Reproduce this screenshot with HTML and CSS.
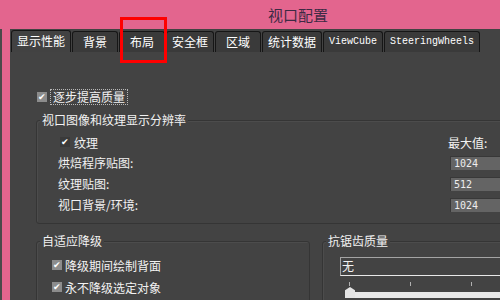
FILE: index.html
```html
<!DOCTYPE html>
<html lang="zh-CN">
<head>
<meta charset="UTF-8">
<title>视口配置</title>
<link rel="stylesheet" href="styles.css">
</head>
<body>
<div class="titlebar">视口配置</div>
<div class="main">
  <div class="edge"></div>
  <div class="panel">
    <div class="tabs">
      <div class="tab active">显示性能</div>
      <div class="tab">背景</div>
      <div class="tab">布局</div>
      <div class="tab">安全框</div>
      <div class="tab">区域</div>
      <div class="tab">统计数据</div>
      <div class="tab mono">ViewCube</div>
      <div class="tab mono">SteeringWheels</div>
    </div>

    <div class="content">
      <div class="check-row top">
        <span class="box grey">✔</span>
        <span class="focus">逐步提高质量</span>
      </div>

      <div class="group res">
        <span class="group-title">视口图像和纹理显示分辨率</span>
        <div class="res-row first">
          <span class="cell"><span class="box dark">✔</span>纹理</span>
          <span class="max">最大值:</span>
        </div>
        <div class="res-row">
          <span class="cell">烘焙程序贴图:</span>
          <span class="num">1024</span>
        </div>
        <div class="res-row">
          <span class="cell">纹理贴图:</span>
          <span class="num">512</span>
        </div>
        <div class="res-row">
          <span class="cell">视口背景/环境:</span>
          <span class="num">1024</span>
        </div>
      </div>

      <div class="bottom">
        <div class="group degrade">
          <span class="group-title">自适应降级</span>
          <div class="check-row line"><span class="box grey">✔</span>降级期间绘制背面</div>
          <div class="check-row line"><span class="box grey">✔</span>永不降级选定对象</div>
        </div>
        <div class="group aa">
          <span class="group-title">抗锯齿质量</span>
          <div class="select">无</div>
          <div class="ticks"><span></span><span></span><span></span></div>
          <div class="slider"><span class="thumb"></span><span class="track"></span></div>
        </div>
      </div>
    </div>
  </div>
</div>
<div class="marker"></div>
</body>
</html>
```

FILE: styles.css
```css
body {
  margin: 0;
  width: 500px;
  height: 300px;
  overflow: hidden;
  background: #e3658e;
  font-family: "Noto Sans CJK SC", "Noto Sans", sans-serif;
  font-size: 12px;
  color: #f2f2f2;
}

.titlebar {
  height: 29px;
  line-height: 29px;
  padding-left: 268px;
  font-size: 15px;
  color: #3d2a44;
}

.main {
  display: flex;
  height: 271px;
}

.edge {
  width: 8px;
  border-left: 2px solid #4a4a4a;
}

.panel {
  flex: 1;
  background: #434343;
  overflow: hidden;
}

/* tabs */
.tabs {
  display: flex;
  align-items: flex-end;
  gap: 1px;
  padding: 1px 0 0 1px;
  height: 23px;
  box-sizing: border-box;
}

.tab {
  height: 21px;
  min-width: 46px;
  box-sizing: border-box;
  padding: 0 5px;
  border: 1px solid #161616;
  border-bottom: none;
  border-radius: 3px 3px 0 0;
  background: #3a3a3a;
  color: #fff;
  text-align: center;
  line-height: 20px;
  white-space: nowrap;
}

.tab.active {
  height: 22px;
  background: #424242;
}

.tab.mono {
  font-family: "Liberation Mono", "DejaVu Sans Mono", monospace;
  font-size: 10px;
}

/* content */
.content {
  padding: 37px 0 0 26px;
}

.check-row {
  display: flex;
  align-items: center;
  height: 16px;
}

.check-row.top {
  margin-left: 1px;
}

.box {
  width: 10px;
  height: 10px;
  margin-right: 3px;
  font-size: 9px;
  line-height: 10px;
  text-align: center;
  color: #fff;
}

.box.grey {
  background: #8c8c8c;
}

.box.dark {
  background: #3a3a3a;
  margin-right: 4px;
}

.focus {
  border: 1px dotted #b8b8b8;
  padding: 0 2px;
  line-height: 14px;
}

/* group boxes */
.group {
  position: relative;
  border: 1px solid #353535;
  border-radius: 3px;
  box-shadow: inset 1px 1px 0 #4c4c4c;
}

.group-title {
  position: absolute;
  top: -9px;
  left: 3px;
  padding: 0 2px;
  background: #434343;
  line-height: 16px;
  white-space: nowrap;
}

.res {
  width: 520px;
  margin-top: 15px;
  padding: 11px 0 8px 21px;
}

.res-row {
  display: flex;
  align-items: center;
  height: 21px;
}

.res-row.first {
  height: 20px;
}

.cell {
  display: flex;
  align-items: center;
  width: 392px;
}

.res-row.first .cell {
  padding-left: 2px;
  width: 390px;
}

.max {
  margin-left: -2px;
}

.num {
  width: 60px;
  height: 14px;
  box-sizing: border-box;
  padding-left: 3px;
  background: #646464;
  border-top: 1px solid #383838;
  border-left: 1px solid #383838;
  font-family: "DejaVu Sans Mono", "Liberation Mono", monospace;
  font-size: 10px;
  line-height: 13px;
  color: #eee;
}

.bottom {
  display: flex;
  gap: 12px;
  margin-top: 17px;
}

.degrade {
  width: 274px;
  height: 80px;
  box-sizing: border-box;
  padding: 12px 0 0 15px;
}

.check-row.line {
  height: 22px;
}

.aa {
  flex: 1;
  margin-right: -30px;
  padding: 15px 0 0 17px;
}

.select {
  height: 19px;
  box-sizing: border-box;
  border: 1px solid #a4a4a4;
  border-bottom-color: #e8e8e8;
  line-height: 16px;
  padding-left: 1px;
}

.ticks {
  display: flex;
  gap: 60px;
  margin: 6px 0 0 9px;
  height: 4px;
}

.ticks span {
  width: 1px;
  height: 4px;
  background: #b0b0b0;
}

.slider {
  display: flex;
  align-items: flex-end;
  height: 12px;
  margin-left: 5px;
}

.thumb {
  width: 10px;
  height: 11px;
  background: #e4e4e4;
  clip-path: polygon(50% 0, 100% 30%, 100% 100%, 0 100%, 0 30%);
}

.track {
  flex: 1;
  height: 6px;
  background: #e8e8e8;
}

/* annotation */
.marker {
  position: absolute;
  left: 120px;
  top: 17px;
  width: 47px;
  height: 46px;
  box-sizing: border-box;
  border: 3px solid #ff0000;
}
```
